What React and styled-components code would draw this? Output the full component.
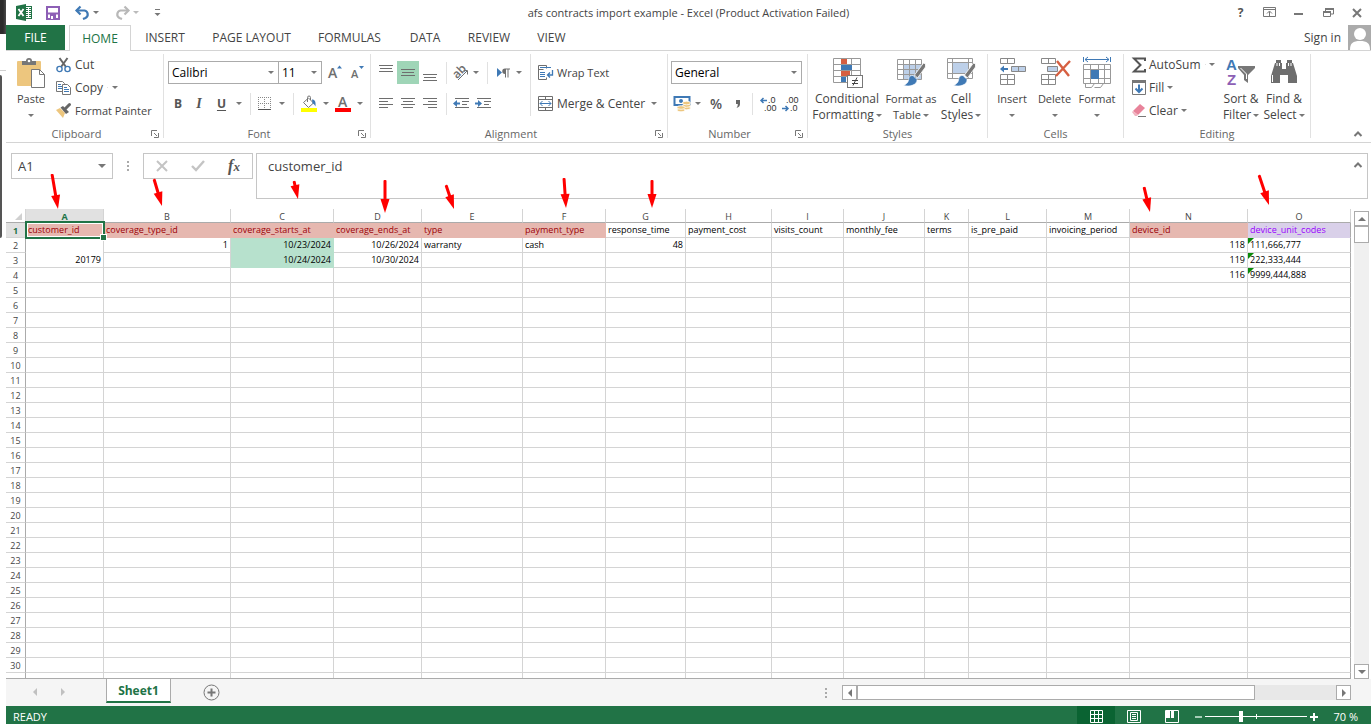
import React, { useState } from 'react';
import styled, { createGlobalStyle, css } from 'styled-components';

const GREEN = '#217346';
const GREY = '#6e6e6e';
const BLUE = '#3f79b5';
const LINE = '#d4d4d4';

const GlobalStyle = createGlobalStyle`
  * { box-sizing: border-box; }
  body {
    margin: 0;
    background: #fff;
    color: #444;
    font-family: 'Open Sans', 'Noto Sans', sans-serif;
    font-size: 12px;
  }
  button, input, select {
    font: inherit;
    color: inherit;
    margin: 0;
    padding: 0;
    border: 0;
    background: none;
    outline: 0;
  }
  svg { display: block; flex: none; overflow: visible; }
`;

// Layout
const Page = styled.div`
  position: relative;
  display: grid;
  grid-template-columns: 6px minmax(0, 1fr);
  height: 100vh;
  overflow: hidden;
`;

const Edge = styled.div`
  display: flex;
  flex-direction: column;
`;

const EdgeDark = styled.div`
  height: 34px;
  background: linear-gradient(90deg, #2b2b2b 50%, #4a4a4a);
`;

const EdgeGap = styled.div`
  height: 37px;
  border-bottom: 1px solid #d0d0d0;
`;

const EdgeWindow = styled.div`
  width: 2px;
  height: 163px;
  margin-top: 4px;
  border-radius: 0 2px 2px 0;
  background: #555;
`;

const Workbook = styled.div`
  display: flex;
  flex-direction: column;
  min-width: 0;
  height: 100vh;
`;

// Title bar
const TitleBar = styled.header`
  display: grid;
  grid-template-columns: 1fr auto 1fr;
  align-items: center;
  flex: none;
  height: 25px;
`;

const QuickAccess = styled.div`
  display: flex;
  align-items: center;
  height: 22px;
  padding-left: 10px;
  gap: 12px;
`;

const Title = styled.h1`
  margin: 0;
  font-size: 11px;
  font-weight: 400;
  color: #444;
`;

const WindowControls = styled.div`
  display: flex;
  justify-content: flex-end;
`;

const IconButton = styled.button`
  display: flex;
  align-items: center;
  justify-content: center;
  flex: none;
  width: ${props => props.$w || 22}px;
  height: ${props => props.$h || 22}px;
  background: ${props => (props.$on ? '#9fd5b7' : 'none')};
`;

const Caret = styled.span`
  flex: none;
  width: 0;
  height: 0;
  border: 3px solid transparent;
  border-top-color: ${props => props.$color || '#777'};
  border-bottom: 0;
`;

// Tabs
const TabBar = styled.nav`
  display: flex;
  flex: none;
  height: 26px;
  border-bottom: 1px solid ${LINE};
`;

const Tab = styled.button`
  width: ${props => props.$w}px;
  height: 25px;
  line-height: 25px;
  text-align: center;
  white-space: nowrap;
  ${props => props.$file && css`
    margin-right: 4px;
    color: #fff;
    background: ${GREEN};
  `}
  ${props => props.$active && css`
    height: 26px;
    color: ${GREEN};
    background: #fff;
    border: 1px solid ${LINE};
    border-bottom: 0;
  `}
`;

const SignIn = styled.button`
  display: flex;
  align-items: center;
  gap: 7px;
  height: 25px;
  margin-left: auto;
`;

// Ribbon
const Ribbon = styled.section`
  display: flex;
  flex: none;
  height: 92px;
  padding: 3px 0 4px;
  border-bottom: 1px solid ${LINE};
`;

const Group = styled.div`
  display: flex;
  flex-direction: column;
  flex: none;
  width: ${props => props.$w}px;
  border-right: 1px solid #e1e1e1;
`;

const GroupBody = styled.div`
  display: flex;
  flex: 1;
  min-height: 0;
  padding-left: ${props => props.$pad}px;
`;

const GroupFooter = styled.div`
  display: flex;
  align-items: center;
  height: 8px;
  line-height: 8px;
  font-size: 11px;
  color: #666;
`;

const GroupName = styled.span`
  flex: 1;
  text-align: center;
`;

const Launcher = styled.button`
  width: 16px;
  padding-left: 4px;
`;

const BigButton = styled.button`
  display: flex;
  flex-direction: column;
  align-items: center;
  align-self: flex-start;
  flex: none;
  gap: 2px;
  width: ${props => props.$w}px;
  padding-top: 3px;
  font-size: ${props => props.$size || 12}px;
`;

const BigLabel = styled.span`
  display: flex;
  flex-direction: column;
  align-items: center;
  line-height: 16px;
  white-space: nowrap;
`;

const LabelLine = styled.span`
  display: flex;
  align-items: center;
  gap: 2px;
  height: 16px;
`;

const SmallColumn = styled.div`
  display: flex;
  flex-direction: column;
  flex: none;
  gap: 2px;
  width: ${props => props.$w || 104}px;
  padding-left: ${props => props.$pad || 0}px;
`;

const SmallButton = styled.button`
  display: flex;
  align-items: center;
  gap: ${props => props.$gap || 4}px;
  height: 21px;
  font-size: ${props => props.$size || 12}px;
  white-space: nowrap;
`;

const Rows = styled.div`
  display: flex;
  flex-direction: column;
  gap: 8px;
  padding-top: 7px;
`;

const Row = styled.div`
  display: flex;
  align-items: center;
  height: 23px;
`;

const Divider = styled.span`
  flex: none;
  width: 1px;
  height: ${props => props.$h || 22}px;
  margin: ${props => props.$m || '0 4px 0 5px'};
  background: #e1e1e1;
`;

const Combo = styled.span`
  display: flex;
  align-items: center;
  width: ${props => props.$w}px;
  height: 23px;
  padding: 0 4px 0 3px;
  color: #000;
  border: 1px solid #ababab;
  & + & { border-left: 0; }
  select {
    flex: 1;
    min-width: 0;
    appearance: none;
  }
`;

const Letter = styled.span`
  font-size: ${props => props.$size || 12}px;
  font-weight: ${props => props.$weight || 700};
  font-style: ${props => (props.$italic ? 'italic' : 'normal')};
  font-family: ${props => (props.$italic ? "'Liberation Serif', serif" : 'inherit')};
  text-decoration: ${props => (props.$line ? 'underline' : 'none')};
  text-underline-offset: 2px;
  color: #555;
  small { font-size: 13px; }
`;

const RibbonEnd = styled.div`
  display: flex;
  flex: 1;
  align-items: flex-end;
  justify-content: flex-end;
  padding-right: 3px;
`;

// Formula bar
const FormulaBar = styled.section`
  display: flex;
  align-items: flex-start;
  flex: none;
  height: 66px;
  padding: 10px 3px 0 5px;
  font-size: 13px;
`;

const NameBox = styled.div`
  display: flex;
  align-items: center;
  width: 102px;
  height: 26px;
  padding: 0 6px;
  border: 1px solid #c6c6c6;
  input { flex: 1; min-width: 0; }
`;

const Dots = styled.span`
  display: flex;
  flex-direction: column;
  align-items: center;
  justify-content: center;
  gap: 2px;
  width: 30px;
  height: 26px;
  &::before, &::after, i {
    content: '';
    width: 2px;
    height: 2px;
    background: #aaa;
  }
`;

const FormulaButtons = styled.div`
  display: flex;
  justify-content: space-around;
  align-items: center;
  width: 110px;
  height: 26px;
  margin-right: 3px;
  border: 1px solid #c6c6c6;
`;

const FormulaBox = styled.div`
  display: flex;
  align-items: flex-start;
  flex: 1;
  height: 46px;
  padding: 0 4px 0 11px;
  border: 1px solid #c6c6c6;
  input {
    flex: 1;
    height: 24px;
  }
`;

// Sheet
const SheetArea = styled.main`
  display: flex;
  flex: 1;
  min-height: 0;
`;

const TableWrap = styled.div`
  flex: 1;
  min-width: 0;
  overflow: hidden;
  border-bottom: 1px solid #ababab;
`;

const Table = styled.table`
  width: 100%;
  table-layout: fixed;
  border-collapse: separate;
  border-spacing: 0;
  font-family: 'Open Sans', sans-serif;
  font-size: 9px;
  line-height: 14px;
  color: #000;
`;

const headCell = css`
  padding: 2px 0 0;
  line-height: 12px;
  font-weight: ${props => (props.$active ? 700 : 400)};
  color: ${props => (props.$active ? GREEN : '#444')};
  background: ${props => (props.$active ? '#e1e1e1' : '#fff')};
  text-align: center;
`;

const ColHead = styled.th`
  ${headCell}
  height: 14px;
  line-height: 11px;
  border-right: 1px solid ${LINE};
  border-bottom: 1px solid #ababab;
`;

const RowHead = styled.th`
  ${headCell}
  height: 15px;
  border-right: 1px solid #ababab;
  border-bottom: 1px solid ${LINE};
`;

const Corner = styled.th`
  padding: 0 3px 2px 0;
  vertical-align: bottom;
  border-right: 1px solid ${LINE};
  border-bottom: 1px solid #ababab;
  svg { margin-left: auto; }
`;

const Cell = styled.td`
  position: relative;
  z-index: ${props => (props.$selected ? 1 : 'auto')};
  height: 15px;
  padding: 0 2px;
  white-space: nowrap;
  vertical-align: bottom;
  text-align: ${props => (props.$right ? 'right' : 'left')};
  color: ${props => props.$ink || '#000'};
  background: ${props => props.$fill || 'none'};
  border-right: 1px solid ${props => props.$fill || LINE};
  border-bottom: 1px solid ${props => props.$fill || LINE};
  &:last-child { border-right-color: #ababab; }
  ${props => props.$flag && css`
    &::before {
      content: '';
      position: absolute;
      top: 0;
      left: 0;
      border: 3px solid transparent;
      border-top-color: #0a8a0a;
      border-left-color: #0a8a0a;
    }
  `}
`;

const Selection = styled.span`
  position: absolute;
  inset: -2px -2px -2px -1px;
  z-index: -1;
  border: 2px solid ${GREEN};
  box-shadow: inset 0 0 0 1px #fff;
  &::after {
    content: '';
    position: absolute;
    right: -3px;
    bottom: -3px;
    width: 5px;
    height: 5px;
    background: ${GREEN};
    outline: 1px solid #fff;
  }
`;

// Scroll bars
const VScroll = styled.div`
  display: flex;
  flex-direction: column;
  flex: none;
  width: 20px;
  padding: 2px 2px 0 3px;
`;

const ScrollButton = styled.button`
  display: flex;
  align-items: center;
  justify-content: center;
  flex: none;
  width: 15px;
  height: 15px;
  background: #fff;
  border: 1px solid #ababab;
`;

const VTrack = styled.div`
  flex: 1;
  background: #f0f0f0;
`;

const VThumb = styled.div`
  height: 17px;
  background: #fff;
  border: 1px solid #ababab;
`;

const SheetBar = styled.div`
  display: flex;
  flex: none;
  height: 27px;
  padding-right: 20px;
  background: #f5f5f5;
`;

const SheetNav = styled.div`
  display: flex;
  gap: 6px;
  width: 100px;
  padding: 2px 0 0 18px;
`;

const SheetTab = styled.button`
  width: 65px;
  height: 24px;
  font-size: 12px;
  font-weight: 700;
  color: ${GREEN};
  background: #fff;
  border: 1px solid #ababab;
  border-top: 0;
  border-bottom: 2px solid ${GREEN};
`;

const AddSheet = styled.button`
  width: 17px;
  height: 17px;
  margin: 5px 0 0 32px;
`;

const HScroll = styled.div`
  display: flex;
  align-items: flex-start;
  width: 541px;
  margin-left: auto;
  padding-top: 6px;
  ${Dots} { width: 32px; height: 15px; }
`;

const HTrack = styled.div`
  flex: 1;
  height: 15px;
  background: #e8e8e8;
`;

const HThumb = styled.div`
  width: 83%;
  height: 15px;
  background: #fff;
  border: 1px solid #ababab;
`;

// Status bar
const StatusBar = styled.footer`
  display: flex;
  align-items: center;
  flex: none;
  height: 18px;
  padding: 3px 13px 0 7px;
  overflow: hidden;
  font-size: 11px;
  color: #fff;
  background: ${GREEN};
`;

const StatusRight = styled.div`
  display: flex;
  align-items: center;
  margin-left: auto;
`;

const ViewButton = styled.button`
  display: flex;
  align-items: center;
  justify-content: center;
  width: 38px;
  height: 22px;
  background: ${props => (props.$on ? '#0a6332' : 'none')};
`;

const ZoomSlider = styled.input`
  width: 102px;
  height: 11px;
  appearance: none;
  background:
    linear-gradient(#fff, #fff) 50% 50% / 1px 5px no-repeat,
    linear-gradient(#fff, #fff) 50% 50% / 100% 1px no-repeat;
  &::-webkit-slider-thumb {
    appearance: none;
    width: 4px;
    height: 11px;
    background: #fff;
  }
`;

const ZoomValue = styled.span`
  width: 37px;
  text-align: right;
`;

const Arrows = styled.svg`
  position: absolute;
  top: 0;
  left: 0;
  pointer-events: none;
`;

// Icons
const Bars = ({ y = 0, widths = [14, 12, 14], align = 'center' }) => (
  <svg width="14" height="18" fill={GREY}>
    {widths.map((w, i) => {
      const x = align === 'left' ? 0 : align === 'right' ? 14 - w : (14 - w) / 2;
      return <rect key={i} x={x} y={y + i * 3} width={w} height="1" />;
    })}
  </svg>
);

const ExcelIcon = () => (
  <svg width="17" height="17">
    <rect x="8.500" y="2.500" width="7" height="12" fill="#fff" stroke={GREEN} />
    <path d="M10 4.500h2m1 0h2M10 6.500h2m1 0h2M10 8.500h2m1 0h2M10 10.500h2m1 0h2M10 12.500h2m1 0h2" stroke={GREEN} />
    <path d="M0 2l10-2v17L0 15z" fill={GREEN} />
    <path d="M2.500 5l5 7M7.500 5l-5 7" stroke="#fff" strokeWidth="1.800" />
  </svg>
);

const SaveIcon = () => (
  <svg width="14" height="14" fill="none" stroke="#8d5fb5">
    <path d="M1 1h12v12H1z" strokeWidth="2" />
    <path d="M1 7.500h12" strokeWidth="2" />
    <path d="M4 8h6v5H4z" fill="#8d5fb5" stroke="none" />
    <path d="M5 10h2v3H5z" fill="#fff" stroke="none" />
  </svg>
);

const UndoIcon = ({ color, flip }) => (
  <svg width="15" height="14" fill="none" stroke={color} strokeWidth="2.200">
    <g transform={flip ? 'translate(15 0) scale(-1 1)' : undefined}>
      <path d="M1.500 4.500H9.500a4 4 0 0 1 1 7.500L8 13" />
      <path d="M5.500 0.500l-4 4 4 4" />
    </g>
  </svg>
);

const PasteIcon = () => (
  <svg width="28" height="32">
    <rect x="0" y="4" width="24" height="25" rx="1" fill="#edc67e" />
    <path d="M5 8V4h4a3 3 0 0 1 6 0h4v4z" fill="#777" />
    <circle cx="12" cy="4" r="1.300" fill="#fff" />
    <path d="M14.500 12.500h8l5 5v13h-13z" fill="#fff" stroke="#777" />
    <path d="M22.500 12.500v5h5" fill="none" stroke="#777" />
  </svg>
);

const CutIcon = () => (
  <svg width="15" height="16" fill="none">
    <path d="M3.500 1l6.500 9M11.500 1L5 10" stroke="#666" strokeWidth="2" />
    <circle cx="3.500" cy="12" r="2.600" stroke={BLUE} strokeWidth="1.400" />
    <circle cx="11.500" cy="12" r="2.600" stroke={BLUE} strokeWidth="1.400" />
  </svg>
);

const CopyIcon = () => (
  <svg width="15" height="14" fill="#fff" stroke="#777">
    <path d="M0.500 0.500h6l2 2v8h-8z" />
    <path d="M2 3.500h3M2 5.500h4M2 7.500h4" stroke={BLUE} />
    <path d="M6.500 3.500h5l3 3v7h-8z" />
    <path d="M8 6.500h3M8 8.500h5M8 10.500h5" stroke={BLUE} />
  </svg>
);

const PainterIcon = () => (
  <svg width="15" height="15">
    <path d="M0 7l4-2 5 5-2 5z" fill="#edc67e" />
    <path d="M4.500 4.500L7 3l6 6-3 2z" fill="#666" />
    <path d="M9.500 5.500L13.500 1.500" stroke="#666" strokeWidth="3" strokeLinecap="round" />
  </svg>
);

const LauncherIcon = () => (
  <svg width="8" height="8" fill="none" stroke="#777">
    <path d="M0.500 6V0.500H6M3 3l3 3M7.500 3v4.500H3" />
  </svg>
);

const FontSizeIcon = ({ down }) => (
  <svg width="15" height="20">
    <text x="0" y="15" fontSize={down ? 11 : 14} fontWeight="600" fill={GREY}>A</text>
    <path d={down ? 'M8 3h5l-2.500 3z' : 'M9 5.500h5L11.500 2.500z'} fill={BLUE} />
  </svg>
);

const BorderIcon = () => (
  <svg width="14" height="14" fill="none" stroke="#888">
    <path d="M0 0.500h13M0 6.500h13M0.500 0v13M6.500 0v13M12.500 0v13" strokeDasharray="1 1" />
    <path d="M0 12.500h13" stroke="#555" />
  </svg>
);

const FillIcon = () => (
  <svg width="16" height="16">
    <path d="M2.500 6.500l5-4.500 5 5-5 4.500z" fill="#fff" stroke="#777" />
    <path d="M6.500 6V1.500a1.500 1.500 0 0 1 3 0V4" fill="none" stroke="#777" />
    <path d="M11 3.500c3 0 4 2.500 3.500 7-1-2-2-3-3-3z" fill={BLUE} />
    <rect y="12" width="16" height="4" fill="#ff0" />
  </svg>
);

const FontColorIcon = () => (
  <svg width="16" height="16">
    <text x="3" y="11" fontSize="14" fontWeight="600" fill={GREY}>A</text>
    <rect y="12" width="16" height="4" fill="#f00" />
  </svg>
);

const OrientIcon = () => (
  <svg width="17" height="16">
    <text x="0" y="11" fontSize="12" fontWeight="600" fill={GREY} transform="rotate(-45 6 8)">ab</text>
    <path d="M5 15l9-9M10.500 5.500h4v4" fill="none" stroke={GREY} />
  </svg>
);

const DirectionIcon = () => (
  <svg width="13" height="10" fill={GREY}>
    <path d="M0 0l5 4.500L0 9z" fill={BLUE} />
    <path d="M8 0.500a2.500 2.500 0 0 0 0 5.500v3.500h1V1.500h1.500v8h1V1.500H13V0.500z" />
  </svg>
);

const IndentIcon = ({ right }) => (
  <svg width="16" height="12">
    <path d="M2 0.500h14M9 3.500h7M9 6.500h5M2 9.500h14" stroke={GREY} />
    <path d={right ? 'M0 5.500h4' : 'M3 5.500h4'} stroke={BLUE} strokeWidth="2" />
    <path d={right ? 'M3 2l4 3.500L3 9z' : 'M4 2L0 5.500 4 9z'} fill={BLUE} />
  </svg>
);

const WrapIcon = () => (
  <svg width="16" height="16" fill="none" stroke={GREY}>
    <path d="M0.500 0.500h8v3M0.500 0.500v14h8v-2M0.500 4.500h5" />
    <path d="M2 2.500h11M2 7.500h5M2 9.500h5M2 11.500h5" stroke={BLUE} />
    <path d="M14.500 5v5H10M12 7.500L9.500 10l2.500 2.500" stroke={BLUE} strokeWidth="1.300" />
  </svg>
);

const MergeIcon = () => (
  <svg width="16" height="15" fill="none" stroke={GREY}>
    <path d="M0.500 0.500h14v14H0.500zM0.500 3.500h14M0.500 11.500h14M7.500 0.500v3M7.500 11.500v3" />
    <path d="M2 7.500h11M4.500 5L2 7.500 4.500 10M10.500 5L13 7.500 10.500 10" stroke={BLUE} />
  </svg>
);

const MoneyIcon = () => (
  <svg width="17" height="16">
    <rect x="0.500" y="1" width="15" height="8" fill="#fff" stroke={BLUE} strokeWidth="2" />
    <circle cx="7" cy="5" r="2" fill={BLUE} />
    <g fill="#edc67e" stroke="#fff" strokeWidth="0.800">
      <ellipse cx="12.500" cy="12" rx="4" ry="1.800" />
      <ellipse cx="12.500" cy="9.500" rx="4" ry="1.800" />
      <ellipse cx="12.500" cy="7" rx="4" ry="1.800" />
      <ellipse cx="7" cy="14" rx="4" ry="1.800" />
      <ellipse cx="7" cy="11.500" rx="4" ry="1.800" />
    </g>
  </svg>
);

const DecimalIcon = ({ less }) => (
  <svg width="17" height="16" fontFamily="Liberation Sans" fontSize="9" fill="#333">
    <text x={less ? 4 : 8} y="7">{less ? '.00' : '.0'}</text>
    <text x={less ? 8 : 4} y="15">{less ? '.0' : '.00'}</text>
    <path d={less ? 'M0 12.500h5M3.500 10L6 12.500 3.500 15' : 'M7 4.500H1M3.500 2L1 4.500 3.500 7'} fill="none" stroke={BLUE} strokeWidth="1.500" />
  </svg>
);

const ConditionalIcon = () => (
  <svg width="28" height="32">
    <path d="M0.500 1.500h27v24h-27zM9.500 1v25M18.500 1v25M0.500 7.500h27M0.500 13.500h27M0.500 19.500h27" fill="#fff" stroke="#999" />
    <path d="M8 2h6v5H8zM8 14h9v5H8z" fill="#d65f41" />
    <path d="M8 8h11v5H8zM8 20h5v5H8z" fill={BLUE} />
    <rect x="14.500" y="18.500" width="15" height="12" fill="#fff" stroke="#777" />
    <path d="M19 23.500h6M19 26.500h6M24 20.500l-4 8" stroke="#444" />
  </svg>
);

const BrushPart = () => (
  <>
    <path d="M28.500 7l-2-1-9 12 3 3 8-11z" fill="#777" stroke="#fff" strokeWidth="0.800" />
    <path d="M16 18.500c-4 0-4 2-4.500 5-.5 2.500-3 4-5 5 6 1.500 14-.5 13.500-6z" fill={BLUE} stroke="#fff" strokeWidth="0.600" />
  </>
);

const FormatTableIcon = () => (
  <svg width="28" height="32">
    <rect x="7" y="8" width="18" height="14" fill="#bdd0e9" />
    <path d="M0.500 2.500h24v20h-24zM6.500 2v21M12.500 2v21M18.500 2v21M0.500 7.500h24M0.500 12.500h24M0.500 17.500h24" fill="none" stroke="#999" />
    <BrushPart />
  </svg>
);

const CellStylesIcon = () => (
  <svg width="28" height="32">
    <path d="M0.500 1.500h25v20h-25zM5.500 1v21M21.500 1v21M0.500 5.500h25M0.500 16.500h25" fill="none" stroke="#999" />
    <rect x="6" y="6" width="15" height="10" fill="#bdd0e9" />
    <BrushPart />
  </svg>
);

const InsertIcon = () => (
  <svg width="27" height="32" fill="none" stroke="#888">
    <path d="M1.500 1.500h14v5h-14zM8.500 1.500v5M1.500 17.500h14v10h-14zM8.500 17.500v10M1.500 22.500h14" />
    <path d="M12.500 9.500h14v5h-14zM19.500 9.500v5" fill="#bdd0e9" />
    <path d="M9 12H4" stroke={BLUE} strokeWidth="2" />
    <path d="M1 12l4-3.500v7z" fill={BLUE} stroke="none" />
  </svg>
);

const DeleteIcon = () => (
  <svg width="28" height="32" fill="none" stroke="#888">
    <path d="M0.500 1.500h14v5h-14zM7.500 1.500v5M0.500 17.500h14v10h-14zM7.500 17.500v10M0.500 22.500h14" />
    <path d="M6.500 9.500h10v5h-10z" fill="#bdd0e9" />
    <path d="M16 4l12 15M29 4L15 19" stroke="#d65f41" strokeWidth="2.400" />
  </svg>
);

const FormatIcon = () => (
  <svg width="28" height="32" fill="none" stroke="#999">
    <path d="M0.500 0v5M27.500 0v5M2 2.500h24M5 0L2 2.500 5 5M23 0l3 2.500L23 5" stroke={BLUE} />
    <path d="M0.500 7.500h27v19h-27zM7.500 7v19M15.500 7v19M21.500 7v19M0.500 12.500h27M0.500 21.500h27" fill="#fff" />
    <rect x="8" y="13" width="8" height="9" fill={BLUE} stroke="none" />
    <path d="M2.500 26.500v4h6l3-4M11.500 30.500h6l3-4" />
  </svg>
);

const SigmaIcon = () => (
  <svg width="14" height="16" fill="none" stroke="#555" strokeWidth="2">
    <path d="M13 4V1.500H2L8.500 8 2 14.500h11V12" />
  </svg>
);

const FillDownIcon = () => (
  <svg width="14" height="15" fill="none">
    <path d="M0.500 0.500h13v14H0.500z" stroke="#777" />
    <path d="M0 0h14v3H0z" fill="#777" />
    <path d="M7 4.500v8M3.500 8.500L7 12l3.500-3.500" stroke={BLUE} strokeWidth="2" />
  </svg>
);

const EraserIcon = () => (
  <svg width="14" height="14">
    <path d="M8 0l5 4-7 7-5-4z" fill="#e8839a" />
    <path d="M0 8l1-1 5 4-1 1H3z" fill="#f1b3c0" />
    <path d="M6 12.500h8" stroke="#777" />
  </svg>
);

const SortIcon = () => (
  <svg width="30" height="32" fontFamily="Liberation Sans" fontSize="15" fontWeight="700">
    <text x="0" y="13" fill={BLUE}>A</text>
    <text x="1" y="28" fill="#8d5fb5">Z</text>
    <path d="M12 9h17v2l-7 7v8l-4-3v-5l-6-7z" fill="#777" />
    <path d="M14.500 11l6 6v5" fill="none" stroke="#fff" />
  </svg>
);

const FindIcon = () => (
  <svg width="26" height="32" fill="#6e6e6e">
    <path d="M5 3h5v3h1v6h4V6h1V3h5v3h1l4 13v7h-9v-8h-8v8H0v-7L4 6h1z" />
    <path d="M6 6v3M8.500 6v3M17.500 6v3M20 6v3M1.500 18v7M16.500 18v7" stroke="#fff" />
  </svg>
);

const Tri = ({ dir, color = '#777' }) => {
  const d = {
    up: 'M0 6l4-4 4 4z',
    down: 'M0 2l4 4 4-4z',
    left: 'M6 0L2 4l4 4z',
    right: 'M2 0l4 4-4 4z',
  }[dir];
  return <svg width="8" height="8"><path d={d} fill={color} /></svg>;
};

const Chevron = () => (
  <svg width="10" height="8" fill="none" stroke="#777" strokeWidth="2">
    <path d="M1.500 6L5 2.500 8.500 6" />
  </svg>
);

// Sheet data
const COLUMNS = [
  ['A', 78], ['B', 127], ['C', 103], ['D', 88], ['E', 101], ['F', 83], ['G', 80], ['H', 86],
  ['I', 72], ['J', 81], ['K', 44], ['L', 78], ['M', 83], ['N', 118], ['O', null],
];

const LAST_ROW = 30;

const HEADERS = [
  'customer_id', 'coverage_type_id', 'coverage_starts_at', 'coverage_ends_at', 'type',
  'payment_type', 'response_time', 'payment_cost', 'visits_count', 'monthly_fee', 'terms',
  'is_pre_paid', 'invoicing_period', 'device_id', 'device_unit_codes',
];

const REQUIRED = ['A', 'B', 'C', 'D', 'E', 'F', 'N'];

const DATA = {
  A2: '20179', B2: '1', C2: '10/23/2024', D2: '10/26/2024', E2: 'warranty', F2: 'cash', G2: '48',
  N2: '118', O2: '111,666,777',
  C3: '10/24/2024', D3: '10/30/2024', N3: '119', O3: '222,333,444',
  N4: '116', O4: '9999,444,888',
};

const RIGHT = ['A', 'B', 'C', 'D', 'G', 'N'];

const TABS = [
  ['HOME', 62], ['INSERT', 68], ['PAGE LAYOUT', 105], ['FORMULAS', 91], ['DATA', 60],
  ['REVIEW', 68], ['VIEW', 57],
];

const ARROWS = [
  [52, 174, 58, 209], [154, 179, 162, 206], [294, 181, 298, 199], [385, 180, 385, 213],
  [446, 185, 454, 209], [564, 178, 566, 208], [652, 180, 652, 208], [1144, 187, 1150, 212],
  [1259, 175, 1269, 205],
];

const HeaderCell = ({ col, text }) => {
  const required = REQUIRED.includes(col);
  const purple = col === 'O';
  return (
    <Cell
      $selected={col === 'A'}
      $ink={required ? '#9c0006' : purple ? '#9900ff' : undefined}
      $fill={required ? '#e6b8b0' : purple ? '#d9d0e9' : undefined}
    >
      {text}
      {col === 'A' && <Selection />}
    </Cell>
  );
};

const BodyRow = ({ n }) => (
  <tr>
    <RowHead scope="row">{n <= LAST_ROW && n}</RowHead>
    {COLUMNS.map(([col]) => {
      if (col === 'A' && n === 3) return null;
      const value = DATA[col + n];
      return (
        <Cell
          key={col}
          rowSpan={col === 'A' && n === 2 ? 2 : undefined}
          $right={RIGHT.includes(col)}
          $fill={col === 'C' && n < 4 ? '#b7e1cd' : undefined}
          $flag={col === 'O' && value}
        >
          {value}
        </Cell>
      );
    })}
  </tr>
);

const RibbonGroup = ({ name, width, pad = 4, launcher, children }) => (
  <Group $w={width}>
    <GroupBody $pad={pad}>{children}</GroupBody>
    <GroupFooter>
      <GroupName>{name}</GroupName>
      {launcher && <Launcher aria-label={`${name} settings`}><LauncherIcon /></Launcher>}
    </GroupFooter>
  </Group>
);

const Big = ({ icon, lines, width, size }) => (
  <BigButton $w={width} $size={size}>
    {icon}
    <BigLabel>
      <LabelLine>{lines[0]}</LabelLine>
      <LabelLine>{lines[1]}<Caret /></LabelLine>
    </BigLabel>
  </BigButton>
);

const DropButton = ({ w = 12, label, color }) => (
  <IconButton $w={w} aria-label={label}><Caret $color={color} /></IconButton>
);

const ComboBox = ({ label, value, width }) => (
  <Combo $w={width}>
    <select aria-label={label} defaultValue={value}><option>{value}</option></select>
    <Caret />
  </Combo>
);

const App = () => {
  const [formula, setFormula] = useState('customer_id');
  const [zoom, setZoom] = useState(70);

  return (
    <>
      <GlobalStyle />
      <Page>
        <Edge>
          <EdgeDark />
          <EdgeGap />
          <EdgeWindow />
        </Edge>
        <Workbook>
          <TitleBar>
            <QuickAccess>
              <ExcelIcon />
              <IconButton $w={16} aria-label="Save"><SaveIcon /></IconButton>
              <Row>
                <IconButton $w={18} aria-label="Undo"><UndoIcon color={BLUE} /></IconButton>
                <DropButton w={10} label="Undo list" />
              </Row>
              <Row>
                <IconButton $w={18} aria-label="Redo"><UndoIcon color="#b8b8b8" flip /></IconButton>
                <DropButton w={10} label="Redo list" color="#bbb" />
              </Row>
              <IconButton $w={8} aria-label="Customize toolbar">
                <svg width="7" height="8"><path d="M1 0.500h5" stroke="#777" /><path d="M0.500 4h6l-3 3z" fill="#777" /></svg>
              </IconButton>
            </QuickAccess>
            <Title>afs contracts import example - Excel (Product Activation Failed)</Title>
            <WindowControls>
              <IconButton $w={29} aria-label="Help"><Letter>?</Letter></IconButton>
              <IconButton $w={29} aria-label="Ribbon display options">
                <svg width="13" height="11" fill="none" stroke="#777"><path d="M0.500 0.500h12v9H0.500zM0 2.500h13M6.500 9V4.500M4 6.500l2.500-2.500L9 6.500" /></svg>
              </IconButton>
              <IconButton $w={29} aria-label="Minimize">
                <svg width="10" height="10"><path d="M0 6h9" stroke="#777" strokeWidth="2" /></svg>
              </IconButton>
              <IconButton $w={30} aria-label="Restore">
                <svg width="11" height="10" fill="none" stroke="#777"><path d="M2.500 3V1h8v5H8M0.500 4h7v4.500h-7z" /><path d="M2 1h9M0 4h8" strokeWidth="2" /></svg>
              </IconButton>
              <IconButton $w={28} aria-label="Close">
                <svg width="10" height="10"><path d="M1 1l8 8M9 1L1 9" stroke="#777" strokeWidth="2" /></svg>
              </IconButton>
            </WindowControls>
          </TitleBar>

          <TabBar>
            <Tab $w={59} $file>FILE</Tab>
            {TABS.map(([name, w]) => (
              <Tab key={name} $w={w} $active={name === 'HOME'}>{name}</Tab>
            ))}
            <SignIn>
              Sign in
              <svg width="23" height="25">
                <rect width="23" height="25" fill="#ababab" />
                <circle cx="12" cy="9" r="6" fill="#fff" />
                <path d="M2 25c0-7 3-9 10-9s10 2 10 9z" fill="#fff" />
              </svg>
            </SignIn>
          </TabBar>

          <Ribbon>
            <RibbonGroup name="Clipboard" width={158} launcher>
              <Big width={42} size={11} icon={<PasteIcon />} lines={['Paste', '']} />
              <SmallColumn $pad={4}>
                <SmallButton><CutIcon />Cut</SmallButton>
                <SmallButton><CopyIcon />Copy<Divider $h={1} $m="0" /><Caret /></SmallButton>
                <SmallButton $size={11}><PainterIcon />Format Painter</SmallButton>
              </SmallColumn>
            </RibbonGroup>

            <RibbonGroup name="Font" width={207} launcher>
              <Rows>
                <Row>
                  <ComboBox label="Font" value="Calibri" width={111} />
                  <ComboBox label="Font size" value="11" width={43} />
                  <IconButton $w={26} aria-label="Increase font size"><FontSizeIcon /></IconButton>
                  <IconButton $w={20} aria-label="Decrease font size"><FontSizeIcon down /></IconButton>
                </Row>
                <Row>
                  <IconButton $w={20} aria-label="Bold"><Letter>B</Letter></IconButton>
                  <IconButton aria-label="Italic"><Letter $italic $size={14}>I</Letter></IconButton>
                  <IconButton $w={23} aria-label="Underline"><Letter $line>U</Letter></IconButton>
                  <DropButton label="Underline styles" />
                  <Divider />
                  <IconButton $w={20} aria-label="Borders"><BorderIcon /></IconButton>
                  <DropButton w={13} label="Border styles" />
                  <Divider />
                  <IconButton aria-label="Fill color"><FillIcon /></IconButton>
                  <DropButton label="Fill colors" />
                  <IconButton aria-label="Font color"><FontColorIcon /></IconButton>
                  <DropButton label="Font colors" />
                </Row>
              </Rows>
            </RibbonGroup>

            <RibbonGroup name="Alignment" width={297} launcher>
              <Rows>
                <Row>
                  <IconButton aria-label="Top align"><Bars y={1} /></IconButton>
                  <IconButton $h={23} $on aria-label="Middle align"><Bars y={5} /></IconButton>
                  <IconButton aria-label="Bottom align"><Bars y={10} /></IconButton>
                  <Divider />
                  <IconButton $w={20} aria-label="Orientation"><OrientIcon /></IconButton>
                  <DropButton w={10} label="Orientation options" />
                  <Divider $m="0 5px 0 6px" />
                  <IconButton $w={20} aria-label="Text direction"><DirectionIcon /></IconButton>
                  <DropButton label="Direction options" />
                </Row>
                <Row>
                  <IconButton aria-label="Align left"><Bars y={3} widths={[14, 9, 14, 9]} align="left" /></IconButton>
                  <IconButton aria-label="Center"><Bars y={3} widths={[14, 10, 14, 10]} /></IconButton>
                  <IconButton aria-label="Align right"><Bars y={3} widths={[14, 9, 14, 9]} align="right" /></IconButton>
                  <Divider />
                  <IconButton $w={20} aria-label="Decrease indent"><IndentIcon /></IconButton>
                  <IconButton $w={24} aria-label="Increase indent"><IndentIcon right /></IconButton>
                </Row>
              </Rows>
              <Divider $h={62} $m="0 7px 0 5px" />
              <Rows>
                <Row><SmallButton $gap={3} $size={11}><WrapIcon />Wrap Text</SmallButton></Row>
                <Row>
                  <SmallButton $gap={3}><MergeIcon />Merge &amp; Center</SmallButton>
                  <DropButton w={18} label="Merge options" />
                </Row>
              </Rows>
            </RibbonGroup>

            <RibbonGroup name="Number" width={140} pad={3} launcher>
              <Rows>
                <Row><ComboBox label="Number format" value="General" width={131} /></Row>
                <Row>
                  <IconButton aria-label="Accounting format"><MoneyIcon /></IconButton>
                  <DropButton w={10} label="Currencies" />
                  <IconButton $w={26} aria-label="Percent"><Letter $size={14} $weight={600}>%</Letter></IconButton>
                  <IconButton $w={18} aria-label="Comma style">
                    <svg width="6" height="10"><path d="M1 1h4v4c0 2-1 3-3.500 4 1-1.500 1.300-2.500 1.300-4H1z" fill="#666" /></svg>
                  </IconButton>
                  <Divider />
                  <IconButton aria-label="Increase decimal"><DecimalIcon /></IconButton>
                  <IconButton aria-label="Decrease decimal"><DecimalIcon less /></IconButton>
                </Row>
              </Rows>
            </RibbonGroup>

            <RibbonGroup name="Styles" width={180}>
              <Big width={70} icon={<ConditionalIcon />} lines={['Conditional', 'Formatting']} />
              <Big width={58} size={11} icon={<FormatTableIcon />} lines={['Format as', 'Table']} />
              <Big width={42} icon={<CellStylesIcon />} lines={['Cell', 'Styles']} />
            </RibbonGroup>

            <RibbonGroup name="Cells" width={136} pad={3}>
              <Big width={42} size={11} icon={<InsertIcon />} lines={['Insert', '']} />
              <Big width={43} size={11} icon={<DeleteIcon />} lines={['Delete', '']} />
              <Big width={42} size={11} icon={<FormatIcon />} lines={['Format', '']} />
            </RibbonGroup>

            <RibbonGroup name="Editing" width={187} pad={8}>
              <SmallColumn $w={88}>
                <SmallButton $gap={3}><SigmaIcon />AutoSum<Divider $h={1} $m="0 0 0 1px" /><Caret /></SmallButton>
                <SmallButton $gap={3}><FillDownIcon />Fill<Caret /></SmallButton>
                <SmallButton $gap={3}><EraserIcon />Clear<Caret /></SmallButton>
              </SmallColumn>
              <Big width={42} icon={<SortIcon />} lines={['Sort &', 'Filter']} />
              <Big width={44} icon={<FindIcon />} lines={['Find &', 'Select']} />
            </RibbonGroup>

            <RibbonEnd>
              <IconButton $w={20} $h={8} aria-label="Collapse ribbon"><Chevron /></IconButton>
            </RibbonEnd>
          </Ribbon>

          <FormulaBar>
            <NameBox>
              <input aria-label="Name box" defaultValue="A1" />
              <Tri dir="down" />
            </NameBox>
            <Dots><i /></Dots>
            <FormulaButtons>
              <IconButton aria-label="Cancel">
                <svg width="12" height="12"><path d="M1 1l10 10M11 1L1 11" stroke="#c4c4c4" strokeWidth="2" /></svg>
              </IconButton>
              <IconButton aria-label="Enter">
                <svg width="14" height="12" fill="none"><path d="M1 6l4 4 8-9" stroke="#c4c4c4" strokeWidth="2.400" /></svg>
              </IconButton>
              <IconButton aria-label="Insert function"><Letter $italic $size={16}>f<small>x</small></Letter></IconButton>
            </FormulaButtons>
            <FormulaBox>
              <input aria-label="Formula" value={formula} onChange={e => setFormula(e.target.value)} />
              <IconButton $w={10} aria-label="Collapse formula bar"><Chevron /></IconButton>
            </FormulaBox>
          </FormulaBar>

          <SheetArea>
            <TableWrap>
              <Table>
                <colgroup>
                  <col style={{ width: 20 }} />
                  {COLUMNS.map(([col, w]) => <col key={col} style={w ? { width: w } : undefined} />)}
                </colgroup>
                <thead>
                  <tr>
                    <Corner aria-label="Select all">
                      <svg width="7" height="7"><path d="M7 0v7H0z" fill="#d0d0d0" /></svg>
                    </Corner>
                    {COLUMNS.map(([col]) => (
                      <ColHead key={col} scope="col" $active={col === 'A'}>{col}</ColHead>
                    ))}
                  </tr>
                </thead>
                <tbody>
                  <tr>
                    <RowHead scope="row" $active>1</RowHead>
                    {COLUMNS.map(([col], i) => <HeaderCell key={col} col={col} text={HEADERS[i]} />)}
                  </tr>
                  {Array.from({ length: LAST_ROW }, (_, i) => <BodyRow key={i} n={i + 2} />)}
                </tbody>
              </Table>
            </TableWrap>
            <VScroll>
              <ScrollButton aria-label="Scroll up"><Tri dir="up" /></ScrollButton>
              <VTrack><VThumb /></VTrack>
              <ScrollButton aria-label="Scroll down"><Tri dir="down" /></ScrollButton>
            </VScroll>
          </SheetArea>

          <SheetBar>
            <SheetNav>
              <IconButton aria-label="Previous sheet"><Tri dir="left" color="#c0c0c0" /></IconButton>
              <IconButton aria-label="Next sheet"><Tri dir="right" color="#c0c0c0" /></IconButton>
            </SheetNav>
            <SheetTab>Sheet1</SheetTab>
            <AddSheet aria-label="New sheet">
              <svg width="17" height="17" fill="none" stroke="#777">
                <circle cx="8.500" cy="8.500" r="7.500" />
                <path d="M8.500 4.500v8M4.500 8.500h8" strokeWidth="2" />
              </svg>
            </AddSheet>
            <HScroll>
              <Dots><i /></Dots>
              <ScrollButton aria-label="Scroll left"><Tri dir="left" /></ScrollButton>
              <HTrack><HThumb /></HTrack>
              <ScrollButton aria-label="Scroll right"><Tri dir="right" /></ScrollButton>
            </HScroll>
          </SheetBar>

          <StatusBar>
            READY
            <StatusRight>
              <ViewButton $on aria-label="Normal view">
                <svg width="13" height="13" fill="none" stroke="#fff"><path d="M0.500 0.500h12v12H0.500zM4.500 0v13M8.500 0v13M0 4.500h13M0 8.500h13" /></svg>
              </ViewButton>
              <ViewButton aria-label="Page layout view">
                <svg width="14" height="13" fill="none" stroke="#fff"><path d="M0.500 0.500h13v12H0.500zM3.500 2.500h7v8h-7zM5 4.500h4M5 6.500h4M5 8.500h4" /></svg>
              </ViewButton>
              <ViewButton aria-label="Page break view">
                <svg width="14" height="13" fill="none" stroke="#fff"><path d="M0.500 0.500h13v12H0.500z" /><path d="M1 1h4v7H1zM6 1h3v7H6z" fill="#fff" stroke="none" /></svg>
              </ViewButton>
              <IconButton $w={14} aria-label="Zoom out">
                <svg width="7" height="8"><path d="M0 4h7" stroke="#a5cdb6" strokeWidth="2" /></svg>
              </IconButton>
              <ZoomSlider
                type="range"
                min="0"
                max="200"
                aria-label="Zoom"
                value={zoom}
                onChange={e => setZoom(Number(e.target.value))}
              />
              <IconButton $w={14} aria-label="Zoom in">
                <svg width="8" height="8"><path d="M0 4h8M4 0v8" stroke="#fff" strokeWidth="2" /></svg>
              </IconButton>
              <ZoomValue>{zoom} %</ZoomValue>
            </StatusRight>
          </StatusBar>
        </Workbook>

        <Arrows width="1371" height="220" aria-hidden="true">
          {ARROWS.map(([x1, y1, x2, y2]) => {
            const len = Math.hypot(x2 - x1, y2 - y1);
            const angle = (Math.atan2(y2 - y1, x2 - x1) * 180) / Math.PI;
            return (
              <g key={x1} transform={`translate(${x1} ${y1}) rotate(${angle})`} fill="#f00">
                <rect y="-1.500" width={len - 10} height="3" rx="1" />
                <path d={`M${len} 0L${len - 14} -4.500v9z`} />
              </g>
            );
          })}
        </Arrows>
      </Page>
    </>
  );
};

export default App;
